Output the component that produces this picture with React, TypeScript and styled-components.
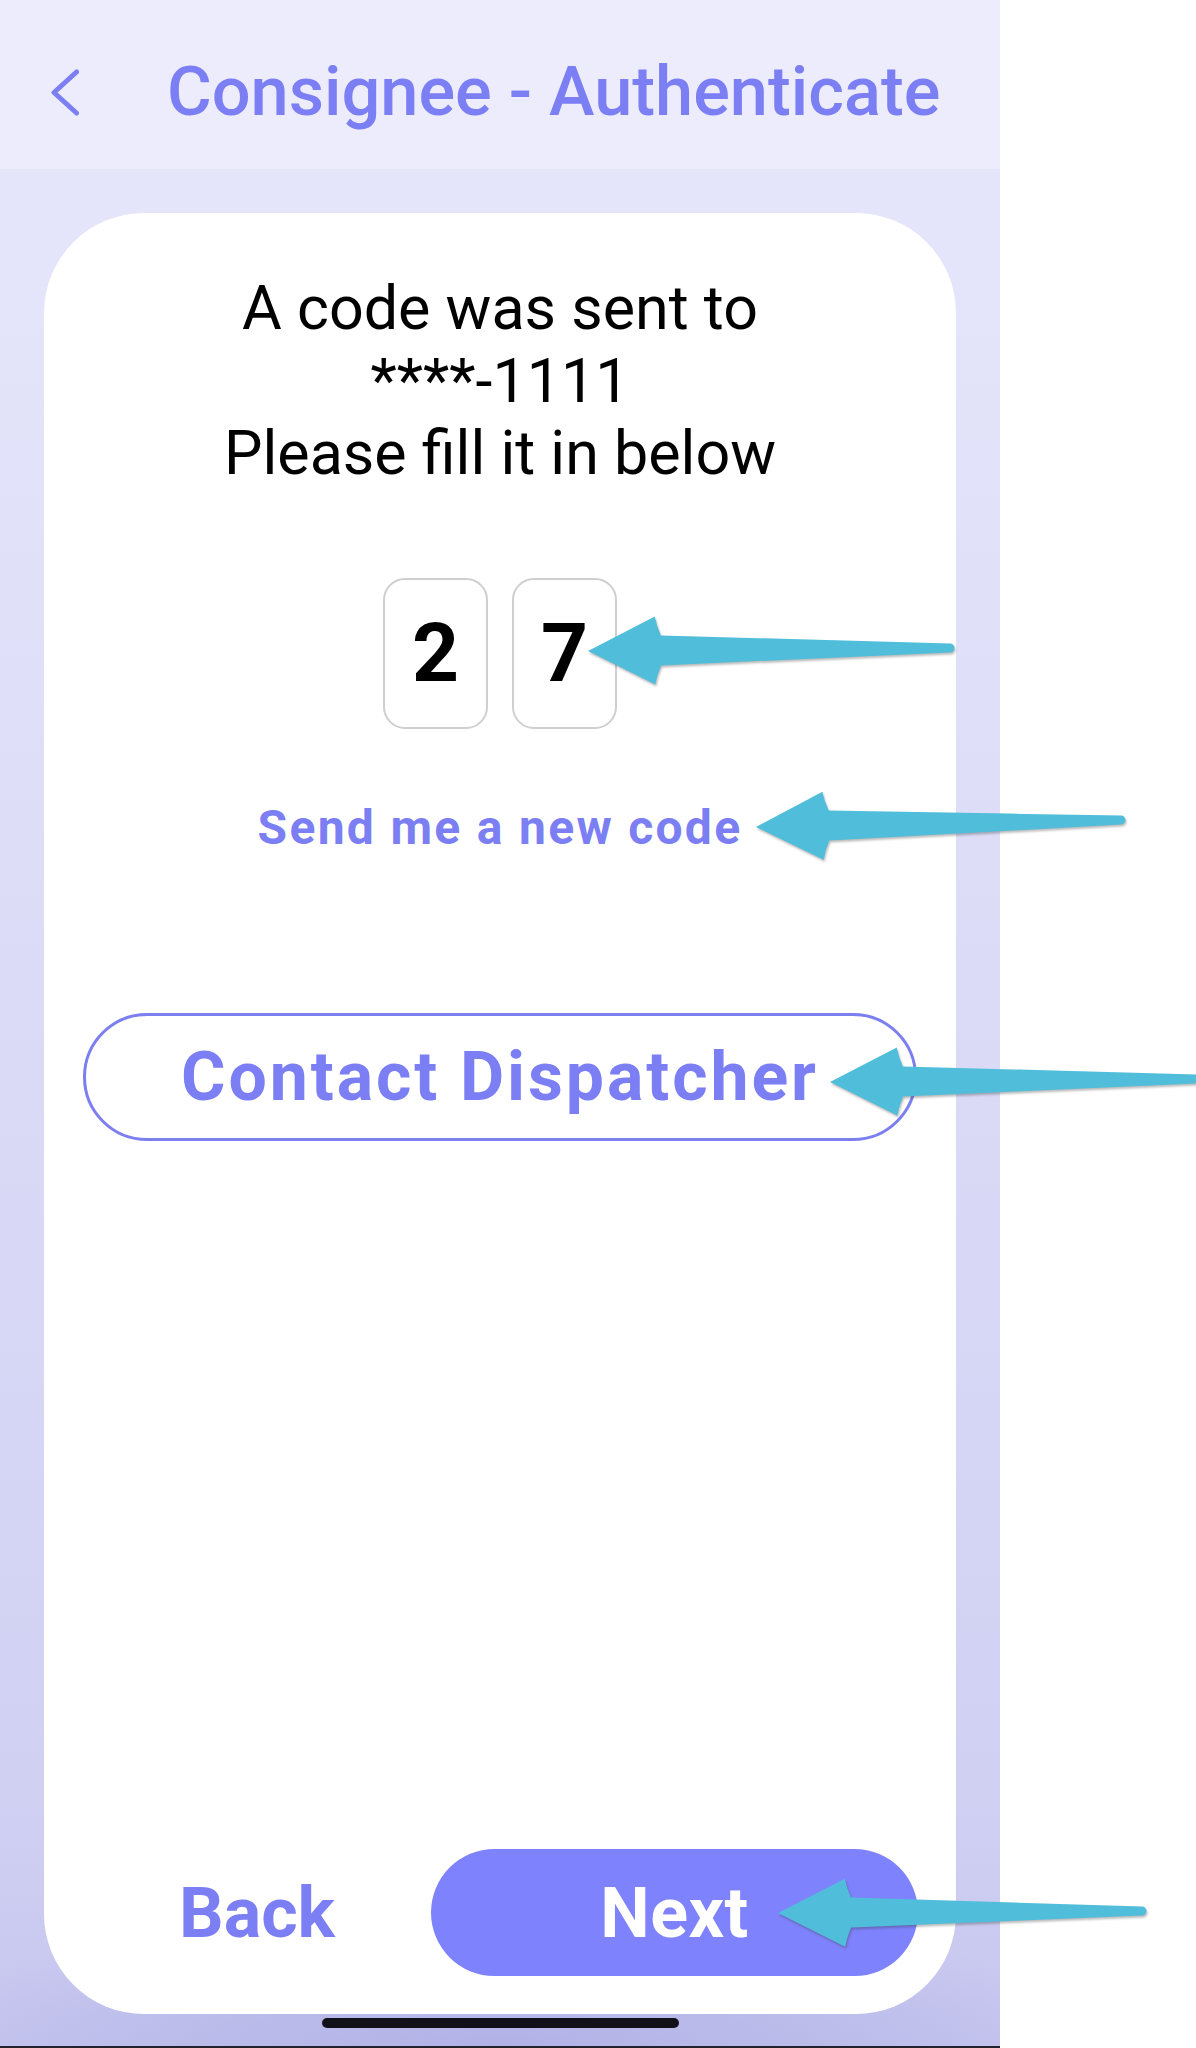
import React from "react";
import styled, { createGlobalStyle } from "styled-components";

const GlobalStyle = createGlobalStyle`
  html, body {
    margin: 0;
    padding: 0;
    background: #ffffff;
  }
  body {
    font-family: Roboto, "Liberation Sans", Arial, sans-serif;
  }
`;

const ACCENT = "#7B7FF3";

const Page = styled.div`
  position: relative;
  display: flex;
  width: 1196px;
  height: 2048px;
  background: #ffffff;
  overflow: hidden;
`;

const Phone = styled.div`
  display: flex;
  flex-direction: column;
  width: 1000px;
  height: 2048px;
  background:
    radial-gradient(ellipse 62% 7% at 50% 100%, rgba(176, 176, 230, 0.95), rgba(176, 176, 230, 0) 100%),
    linear-gradient(180deg, #e7e7fb 0%, #e0e0f9 30%, #d8d8f6 60%, #d0d0f3 88%, #c6c6ef 100%);
`;

const Header = styled.header`
  display: flex;
  align-items: center;
  height: 169px;
  box-sizing: border-box;
  padding: 16px 0 0 51px;
  background: #edecfd;
  flex-shrink: 0;
`;

const BackIcon = styled.svg`
  width: 28px;
  height: 47px;
  flex-shrink: 0;
`;

const Title = styled.h1`
  margin: 0 0 0 88px;
  font-family: Roboto, "Liberation Sans", sans-serif;
  font-weight: 500;
  font-size: 68.5px;
  line-height: 1;
  color: ${ACCENT};
  white-space: nowrap;
`;

const Main = styled.main`
  flex: 1;
  display: flex;
  flex-direction: column;
  padding: 44px 44px 0 44px;
  min-height: 0;
`;

const Card = styled.section`
  flex: 1;
  display: flex;
  flex-direction: column;
  align-items: center;
  background: #ffffff;
  border-radius: 100px;
  padding-top: 59px;
`;

const Message = styled.p`
  margin: 0;
  font-family: Roboto, "Liberation Sans", sans-serif;
  font-weight: 400;
  font-size: 61px;
  line-height: 72.5px;
  color: #000000;
  text-align: center;
`;

const CodeRow = styled.div`
  display: flex;
  gap: 24px;
  margin-top: 88px;
`;

const CodeBox = styled.div`
  display: flex;
  align-items: center;
  justify-content: center;
  width: 105px;
  height: 151px;
  box-sizing: border-box;
  border: 2px solid #cfcfcf;
  border-radius: 22px;
  font-family: Roboto, "Liberation Sans", sans-serif;
  font-weight: 700;
  font-size: 82px;
  color: #000000;
`;

const ResendLink = styled.a`
  margin-top: 75px;
  font-family: Roboto, "Liberation Sans", sans-serif;
  font-weight: 700;
  font-size: 48px;
  line-height: 48px;
  letter-spacing: 2.3px;
  color: ${ACCENT};
  text-decoration: none;
`;

const OutlineButton = styled.button`
  display: flex;
  align-items: center;
  justify-content: center;
  margin-top: 161px;
  width: 834px;
  height: 128px;
  box-sizing: border-box;
  border: 3px solid #7b7fef;
  border-radius: 64px;
  background: #ffffff;
  font-family: Roboto, "Liberation Sans", sans-serif;
  font-weight: 700;
  font-size: 68px;
  letter-spacing: 2.9px;
  color: ${ACCENT};
  padding: 0;
`;

const Spacer = styled.div`
  flex: 1;
`;

const ActionRow = styled.div`
  align-self: stretch;
  display: flex;
  align-items: center;
  padding: 0 38px 38px 135px;
`;

const TextButton = styled.button`
  border: none;
  background: none;
  padding: 0;
  font-family: Roboto, "Liberation Sans", sans-serif;
  font-weight: 700;
  font-size: 70px;
  line-height: 1;
  color: ${ACCENT};
`;

const PrimaryButton = styled.button`
  margin-left: auto;
  width: 487px;
  height: 127px;
  border: none;
  border-radius: 64px;
  background: #7e82fc;
  font-family: Roboto, "Liberation Sans", sans-serif;
  font-weight: 700;
  font-size: 70px;
  letter-spacing: 0.5px;
  color: #ffffff;
  padding: 0;
`;

const HomeArea = styled.div`
  display: flex;
  flex-direction: column;
  align-items: center;
  height: 34px;
  box-sizing: border-box;
  padding-top: 4px;
  flex-shrink: 0;
`;

const HomeIndicator = styled.div`
  width: 357px;
  height: 10px;
  border-radius: 5px;
  background: #12111a;
`;

const BottomEdge = styled.div`
  margin-top: auto;
  align-self: stretch;
  height: 2px;
  background: #23222e;
`;

const Annotations = styled.svg`
  position: absolute;
  left: 0;
  top: 0;
  width: 1196px;
  height: 2048px;
  pointer-events: none;
  filter: drop-shadow(1px 2px 1.2px rgba(60, 60, 60, 0.35));
`;

type ArrowProps = { tx: number; ty: number; ex: number; ey: number };

const Arrow: React.FC<ArrowProps> = ({ tx, ty, ex, ey }) => {
  const dx = ex - tx;
  const dy = ey - ty;
  const len = Math.sqrt(dx * dx + dy * dy);
  const angle = (Math.atan2(dy, dx) * 180) / Math.PI;
  const d = `M0 0 L67 -34 Q69 -24 73 -15 L${len} -4.5 A4.5 4.5 0 0 1 ${len} 4.5 L73 15 Q69 24 67 34 Z`;
  return (
    <g transform={`translate(${tx} ${ty}) rotate(${angle})`}>
      <path d={d} fill="#50bedb" />
    </g>
  );
};

export default function App() {
  return (
    <>
      <GlobalStyle />
      <Page>
        <Phone>
          <Header>
            <BackIcon viewBox="0 0 28 47">
              <polyline
                points="25.5,3 3,23.5 25.5,44"
                fill="none"
                stroke={ACCENT}
                strokeWidth="5"
                strokeLinecap="round"
                strokeLinejoin="round"
              />
            </BackIcon>
            <Title>Consignee - Authenticate</Title>
          </Header>
          <Main>
            <Card>
              <Message>
                A code was sent to
                <br />
                ****-1111
                <br />
                Please fill it in below
              </Message>
              <CodeRow>
                <CodeBox>2</CodeBox>
                <CodeBox>7</CodeBox>
              </CodeRow>
              <ResendLink href="#">Send me a new code</ResendLink>
              <OutlineButton>Contact Dispatcher</OutlineButton>
              <Spacer />
              <ActionRow>
                <TextButton>Back</TextButton>
                <PrimaryButton>Next</PrimaryButton>
              </ActionRow>
            </Card>
          </Main>
          <HomeArea>
            <HomeIndicator />
            <BottomEdge />
          </HomeArea>
        </Phone>
        <Annotations viewBox="0 0 1196 2048">
          <Arrow tx={588} ty={651} ex={950} ey={648} />
          <Arrow tx={756} ty={827} ex={1121} ey={820} />
          <Arrow tx={830} ty={1082} ex={1198} ey={1079} />
          <Arrow tx={778} ty={1913} ex={1142} ey={1911} />
        </Annotations>
      </Page>
    </>
  );
}
